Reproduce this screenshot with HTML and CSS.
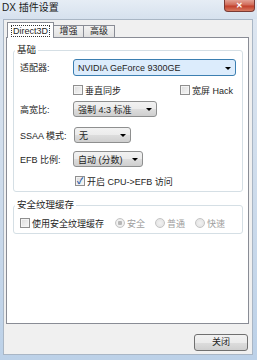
FILE: index.html
```html
<!DOCTYPE html>
<html lang="zh-CN">
  <head>
    <meta charset="UTF-8" />
    <meta name="viewport" content="width=device-width, initial-scale=1.0" />
    <title>DX 插件设置</title>
    <link rel="stylesheet" href="styles.css">
  </head>
  <body>
    <div class="window">
      <!-- タイトルバー -->
      <div class="titlebar">
        <span class="title">DX 插件设置</span>
        <span class="close-btn">✕</span>
      </div>

      <div class="client">
        <!-- タブ -->
        <div class="tabs">
          <div class="tab active"><span class="focus">Direct3D</span></div>
          <div class="tab tab-enhance">增强</div>
          <div class="tab tab-advanced">高级</div>
        </div>

        <div class="panel">
          <!-- 基础 -->
          <fieldset class="group group-basic">
            <legend>基础</legend>

            <div class="row row-adapter">
              <span class="row-label">适配器:</span>
              <div class="combo combo-hot combo-adapter">
                <span>NVIDIA GeForce 9300GE</span><i class="arrow"></i>
              </div>
            </div>

            <div class="row row-checks">
              <span class="row-label"></span>
              <span class="check"><i class="box"></i>垂直同步</span>
              <span class="check check-right"><i class="box"></i>宽屏 Hack</span>
            </div>

            <div class="row row-aspect">
              <span class="row-label">高宽比:</span>
              <div class="combo combo-aspect">
                <span>强制 4:3 标准</span><i class="arrow"></i>
              </div>
            </div>

            <div class="row row-ssaa">
              <span class="row-label">SSAA 模式:</span>
              <div class="combo combo-ssaa">
                <span>无</span><i class="arrow"></i>
              </div>
            </div>

            <div class="row row-efb">
              <span class="row-label">EFB 比例:</span>
              <div class="combo combo-efb">
                <span>自动 (分数)</span><i class="arrow"></i>
              </div>
            </div>

            <div class="row row-cpu">
              <span class="row-label"></span>
              <span class="check check-cpu"><i class="box checked">✓</i>开启 CPU-&gt;EFB 访问</span>
            </div>
          </fieldset>

          <!-- 安全纹理缓存 -->
          <fieldset class="group group-cache">
            <legend>安全纹理缓存</legend>
            <div class="row row-cache">
              <span class="check"><i class="box"></i>使用安全纹理缓存</span>
              <span class="radio radio-first disabled"><i class="dot selected"></i>安全</span>
              <span class="radio disabled"><i class="dot"></i>普通</span>
              <span class="radio disabled"><i class="dot"></i>快速</span>
            </div>
          </fieldset>
        </div>

        <div class="footer">
          <div class="button">关闭</div>
        </div>
      </div>
    </div>
  </body>
</html>
```

FILE: styles.css
```css
* {
  box-sizing: border-box;
}

body {
  margin: 0;
  font-family: "Liberation Sans", "Noto Sans CJK SC", sans-serif;
  font-size: 9px;
  color: #1e1e1e;
}

/* ウィンドウ枠 */
.window {
  width: 257px;
  height: 360px;
  display: flex;
  flex-direction: column;
  background: linear-gradient(to bottom, #dfe7f1 0%, #cbdaeb 60%, #bcd1e8 100%);
  padding: 0 4px 5px 3px;
}

.titlebar {
  height: 19px;
  display: flex;
  align-items: flex-start;
  justify-content: space-between;
  margin-left: -3px;
  margin-right: -4px;
  padding-left: 2px;
  background: linear-gradient(to bottom, #e6edf5, #d6e1ee);
}

.title {
  font-size: 10px;
  line-height: 11px;
  margin-top: 2px;
  color: #1a1a1a;
}

.close-btn {
  width: 31px;
  height: 12px;
  margin-right: 2px;
  border: 1px solid #7a3a34;
  border-top: none;
  border-radius: 0 0 4px 4px;
  background: linear-gradient(to bottom, #e3a194 0%, #d06a58 45%, #c2402c 55%, #d77b62 100%);
  color: #fff;
  font-size: 8px;
  line-height: 11px;
  text-align: center;
  font-weight: bold;
}

.client {
  flex: 1;
  display: flex;
  flex-direction: column;
  background: #f0f0f0;
  border: 1px solid #a9b6c5;
  padding: 2px 3px 3px 2px;
}

/* タブ */
.tabs {
  display: flex;
  align-items: flex-end;
  height: 15px;
  padding-left: 1px;
  position: relative;
  z-index: 1;
}

.tab {
  height: 12px;
  border: 1px solid #898c95;
  border-bottom: none;
  border-left: none;
  background: linear-gradient(to bottom, #f3f3f3, #e1e1e1);
  line-height: 11px;
  text-align: center;
}

.tab-enhance {
  width: 30px;
}

.tab-advanced {
  width: 31px;
}

.tab.active {
  width: 47px;
  height: 16px;
  margin-bottom: -1px;
  border-left: 1px solid #898c95;
  background: #fff;
  padding-top: 2px;
}

.focus {
  display: inline-block;
  border: 1px dotted #333;
  padding: 0 1px;
  line-height: 10px;
}

.panel {
  flex: 1;
  background: #fff;
  border: 1px solid #898c95;
  padding: 6px 5px 0 6px;
}

/* グループボックス */
.group {
  margin: 0;
  border: 1px solid #d5dfe5;
  border-radius: 3px;
  padding: 3px 6px 4px 6px;
}

.group legend {
  padding: 0 2px;
  margin-left: -5px;
  line-height: 12px;
  font-size: 9.5px;
}

.group-cache {
  margin-top: 7px;
  padding-top: 6px;
}

.row {
  display: flex;
  align-items: center;
}

.row-label {
  width: 53px;
  flex-shrink: 0;
}

.row-checks {
  margin-top: 8px;
  height: 12px;
  padding-right: 3px;
}

.row-aspect {
  margin-top: 5px;
}

.row-ssaa {
  margin-top: 10px;
}

.row-efb {
  margin-top: 8px;
}

.row-cpu {
  margin-top: 8px;
  height: 12px;
}

/* コンボボックス */
.combo {
  height: 16px;
  display: flex;
  align-items: center;
  justify-content: space-between;
  padding: 0 4px 0 4px;
  border: 1px solid #8e8f8f;
  border-radius: 3px;
  background: linear-gradient(to bottom, #f2f2f2 0%, #ebebeb 50%, #dddddd 51%, #cfcfcf 100%);
}

.combo-hot {
  height: 17px;
  border-color: #3c7fb1;
  background: linear-gradient(to bottom, #eaf6fd 0%, #d9f0fc 50%, #bee6fd 51%, #a7d9f5 100%);
  background: #dcecfc;
}

.combo-adapter {
  flex: 1;
}

.combo-aspect {
  width: 84px;
}

.combo-ssaa {
  width: 57px;
  margin-left: 1px;
}

.combo-efb {
  width: 70px;
}

.arrow {
  width: 0;
  height: 0;
  border-left: 3px solid transparent;
  border-right: 3px solid transparent;
  border-top: 3px solid #000;
  margin-top: 1px;
}

/* チェックボックス */
.check,
.radio {
  display: inline-flex;
  align-items: center;
  white-space: nowrap;
}

.box {
  width: 10px;
  height: 10px;
  margin-right: 2px;
  border: 1px solid #8f8f8f;
  background: linear-gradient(135deg, #dcdcdc, #f7f7f7);
  box-shadow: inset 0 0 0 1px #f4f4f4;
  font-style: normal;
  font-size: 9px;
  line-height: 8px;
  text-align: center;
  color: #2b5ea8;
  font-weight: bold;
}

.check-right {
  margin-left: auto;
}

.check-cpu {
  margin-left: 2px;
}

.row-cache {
  height: 12px;
}

.radio {
  margin-left: 10px;
}

.radio-first {
  margin-left: 11px;
}

.radio.disabled {
  color: #a0a0a0;
}

.dot {
  width: 10px;
  height: 10px;
  margin-right: 2px;
  border: 1px solid #c4c4c4;
  border-radius: 50%;
  background: radial-gradient(circle, #f2f2f2 0%, #e0e0e0 100%);
}

.dot.selected {
  background: radial-gradient(circle, #b8b8b8 0%, #b8b8b8 35%, #f2f2f2 45%, #e0e0e0 100%);
}

/* フッター */
.footer {
  display: flex;
  justify-content: flex-end;
  padding-top: 10px;
  padding-right: 1px;
}

.button {
  width: 54px;
  height: 17px;
  border: 1px solid #707070;
  border-radius: 3px;
  background: linear-gradient(to bottom, #f2f2f2 0%, #ebebeb 50%, #dddddd 51%, #cfcfcf 100%);
  text-align: center;
  line-height: 15px;
}
```
